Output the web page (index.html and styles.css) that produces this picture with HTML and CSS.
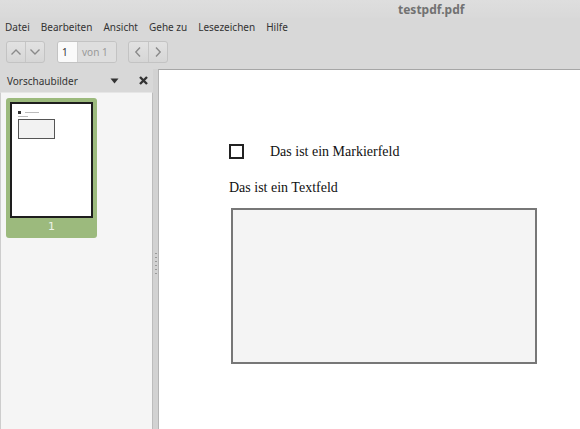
FILE: index.html
```html
<!DOCTYPE html>
<html lang="de">
<head>
<meta charset="utf-8">
<title>testpdf.pdf</title>
<link rel="stylesheet" href="styles.css">
</head>
<body>
<div class="window">
  <div class="titlebar">testpdf.pdf</div>
  <div class="menubar">
    <span>Datei</span><span>Bearbeiten</span><span>Ansicht</span><span>Gehe zu</span><span>Lesezeichen</span><span>Hilfe</span>
  </div>
  <div class="toolbar">
    <div class="btn-group updown">
      <div class="btn"><svg width="12" height="8" viewBox="0 0 12 8"><path d="M1.5 6.5 L6 2 L10.5 6.5" fill="none" stroke="#8a8a8a" stroke-width="1.4"/></svg></div>
      <div class="btn"><svg width="12" height="8" viewBox="0 0 12 8"><path d="M1.5 1.5 L6 6 L10.5 1.5" fill="none" stroke="#8a8a8a" stroke-width="1.4"/></svg></div>
    </div>
    <div class="page-entry">
      <span class="page-num">1</span><span class="page-of">von 1</span>
    </div>
    <div class="btn-group nav">
      <div class="btn"><svg width="8" height="12" viewBox="0 0 8 12"><path d="M6 1.5 L1.8 6 L6 10.5" fill="none" stroke="#8a8a8a" stroke-width="1.4"/></svg></div>
      <div class="btn"><svg width="8" height="12" viewBox="0 0 8 12"><path d="M2 1.5 L6.2 6 L2 10.5" fill="none" stroke="#8a8a8a" stroke-width="1.4"/></svg></div>
    </div>
  </div>
  <div class="content">
    <div class="sidebar">
      <div class="sidebar-header">
        <span class="sidebar-title">Vorschaubilder</span>
        <svg class="dd" width="9" height="6" viewBox="0 0 9 6"><path d="M0.5 0.5 L8.5 0.5 L4.5 5.5 Z" fill="#333"/></svg>
        <svg class="close" width="9" height="9" viewBox="0 0 9 9"><path d="M1 1 L8 8 M8 1 L1 8" stroke="#333" stroke-width="2.4"/></svg>
      </div>
      <div class="sidebar-body">
        <div class="thumb">
          <div class="thumb-page">
            <div class="t-row"><span class="t-check"></span><span class="t-line t-line1"></span></div>
            <span class="t-line t-line2"></span>
            <div class="t-box"></div>
          </div>
          <div class="thumb-label">1</div>
        </div>
      </div>
    </div>
    <div class="handle"><div class="grip"></div></div>
    <div class="main">
      <div class="page">
        <div class="check-row">
          <span class="checkbox"></span>
          <span class="label">Das ist ein Markierfeld</span>
        </div>
        <div class="text-label">Das ist ein Textfeld</div>
        <div class="textbox"></div>
      </div>
    </div>
  </div>
</div>
</body>
</html>
```

FILE: styles.css
```css
* { box-sizing: border-box; }
html, body {
  margin: 0;
  padding: 0;
  width: 580px;
  height: 429px;
  overflow: hidden;
  background: #d8d8d8;
  font-family: "Noto Sans", "DejaVu Sans", sans-serif;
}
.window {
  display: flex;
  flex-direction: column;
  height: 429px;
}
.titlebar {
  height: 18px;
  line-height: 19px;
  padding-left: 398px;
  font-size: 12px;
  font-weight: bold;
  color: #727272;
  background: linear-gradient(#dedede, #d9d9d9);
}
.menubar {
  height: 18px;
  display: flex;
  align-items: center;
  gap: 11px;
  padding-left: 5px;
  font-size: 10px;
  color: #333;
}
.toolbar {
  height: 33px;
  display: flex;
  align-items: flex-start;
  padding: 5px 0 0 6px;
}
.btn-group {
  display: flex;
  height: 22px;
  border: 1px solid #c3c3c3;
  border-radius: 3px;
  overflow: hidden;
  background: linear-gradient(#e2e2e2, #d6d6d6);
}
.btn-group .btn {
  width: 19px;
  display: flex;
  align-items: center;
  justify-content: center;
}
.btn-group .btn + .btn { border-left: 1px solid #c6c6c6; }
.updown { width: 39px; margin-right: 12px; }
.nav { width: 40px; margin-left: 11px; }
.nav .btn { width: 20px; }
.page-entry {
  width: 60px;
  height: 22px;
  display: flex;
  border: 1px solid #c3c3c3;
  border-radius: 3px;
  overflow: hidden;
  font-size: 10px;
  line-height: 20px;
}
.page-num {
  width: 20px;
  background: #fafafa;
  color: #333;
  padding-left: 4px;
  border-right: 1px solid #d0d0d0;
}
.page-of {
  flex: 1;
  background: #dedede;
  color: #999;
  padding-left: 4px;
}
.content {
  flex: 1;
  display: flex;
  min-height: 0;
}
.sidebar {
  width: 153px;
  display: flex;
  flex-direction: column;
}
.sidebar-header {
  height: 23px;
  display: flex;
  align-items: center;
  padding-left: 7px;
  font-size: 10px;
  color: #333;
}
.sidebar-title { width: 103px; }
.dd { margin-right: 20px; }
.sidebar-body {
  flex: 1;
  background: #f5f5f5;
  border-left: 1px solid #cdcdcd;
  border-right: 1px solid #bcbcbc;
  border-top: 1px solid #e6e6e6;
  padding: 5px 0 0 5px;
}
.thumb {
  width: 91px;
  height: 140px;
  background: #9cba7d;
  border-radius: 3px;
  padding: 4px 4px 0 4px;
  display: flex;
  flex-direction: column;
}
.thumb-page {
  height: 116px;
  background: #fff;
  border: 2px solid #1e1e1e;
  padding: 7px 0 0 6px;
}
.t-row { display: flex; align-items: center; gap: 4px; height: 3px; }
.t-check { width: 3px; height: 3px; background: #333; }
.t-line { display: block; height: 1px; background: #bbb; }
.t-line1 { width: 14px; }
.t-line2 { width: 10px; margin-top: 2px; }
.t-box {
  width: 37px;
  height: 20px;
  margin-top: 2px;
  border: 1.5px solid #555;
  background: #f2f2f2;
}
.thumb-label {
  flex: 1;
  text-align: center;
  font-family: "DejaVu Sans", sans-serif;
  font-size: 11px;
  line-height: 18px;
  color: #eef3e8;
}
.handle {
  width: 5px;
  background: #d2d2d2;
  display: flex;
  flex-direction: column;
  justify-content: center;
  align-items: center;
}
.grip {
  width: 2px;
  height: 22px;
  margin-top: 30px;
  background: repeating-linear-gradient(#999 0 1px, transparent 1px 4px);
}
.main {
  flex: 1;
  background: #fff;
  border-top: 1px solid #a6a6a6;
  border-left: 1px solid #b4b4b4;
}
.page {
  padding: 74px 0 0 70px;
  font-family: "Liberation Serif", "Times New Roman", serif;
  font-size: 14px;
  color: #111;
}
.check-row {
  display: flex;
  align-items: center;
  height: 15px;
}
.checkbox {
  width: 15px;
  height: 15px;
  border: 2px solid #222;
  margin-right: 26px;
}
.label { line-height: 15px; }
.text-label {
  margin-top: 21px;
  line-height: 15px;
}
.textbox {
  width: 306px;
  height: 156px;
  margin: 13px 0 0 2px;
  border: 2px solid #777;
  background: #f4f4f4;
}
```
